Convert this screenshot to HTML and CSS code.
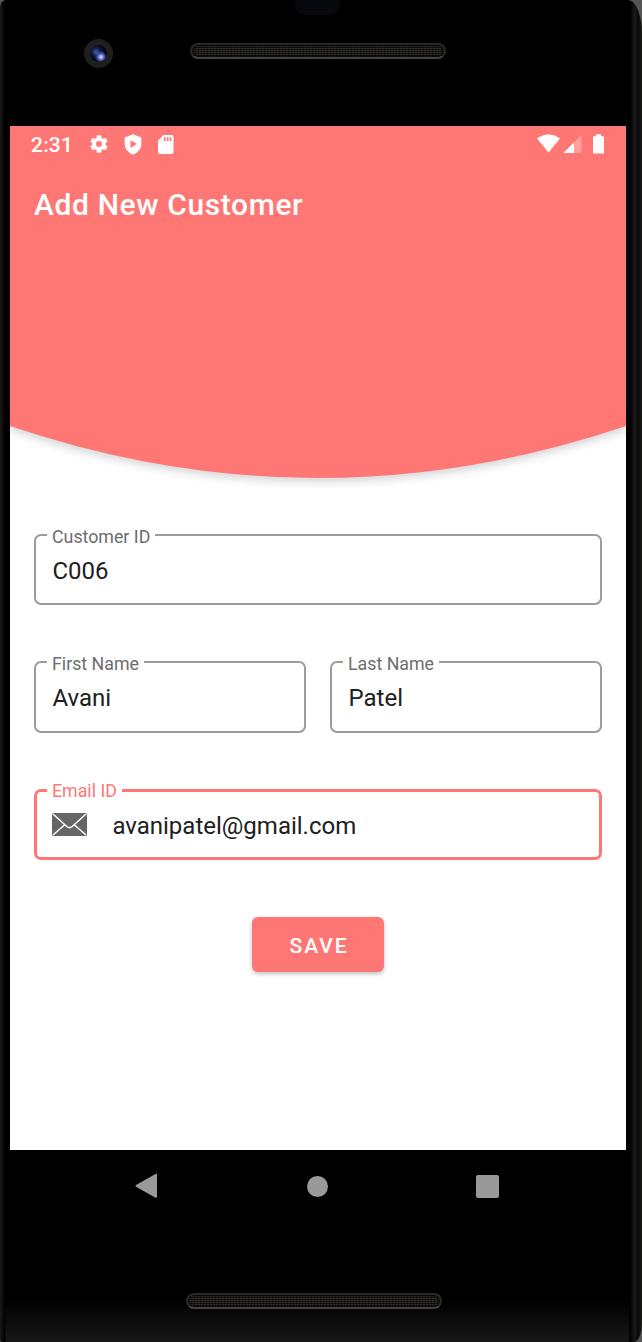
FILE: index.html
```html
<!DOCTYPE html>
<html lang="en">
<head>
<meta charset="utf-8">
<title>Add New Customer</title>
<link rel="stylesheet" href="styles.css">
</head>
<body>
<div class="phone">
  <div class="bezel-top">
    <span class="sensor"></span>
    <span class="camera"><span class="lens"></span></span>
    <span class="speaker"></span>
  </div>
  <main class="screen">
    <header class="header">
      <svg class="curve" width="616" height="380" viewBox="0 0 616 380"><path d="M0 0H616V300Q308 404 0 300Z" fill="#ff7774"/></svg>
      <div class="status">
        <span class="time">2:31</span>
        <svg class="gear" width="22" height="22" viewBox="0 0 24 24" fill="#fff"><path d="M19.14 12.94c.04-.3.06-.61.06-.94 0-.32-.02-.64-.07-.94l2.03-1.58a.49.49 0 0 0 .12-.61l-1.92-3.32a.488.488 0 0 0-.59-.22l-2.39.96c-.5-.38-1.03-.7-1.62-.94l-.36-2.54a.484.484 0 0 0-.48-.41h-3.84c-.24 0-.43.17-.47.41l-.36 2.54c-.59.24-1.13.57-1.62.94l-2.39-.96c-.22-.08-.47 0-.59.22L2.74 8.87c-.12.21-.08.47.12.61l2.03 1.58c-.05.3-.09.63-.09.94s.02.64.07.94l-2.03 1.58a.49.49 0 0 0-.12.61l1.92 3.32c.12.22.37.29.59.22l2.39-.96c.5.38 1.03.7 1.62.94l.36 2.54c.05.24.24.41.48.41h3.84c.24 0 .44-.17.47-.41l.36-2.54c.59-.24 1.13-.56 1.62-.94l2.39.96c.22.08.47 0 .59-.22l1.92-3.32c.12-.22.07-.47-.12-.61l-2.01-1.58zM12 15.2a3.200 3.200 0 1 1 0-6.400 3.200 3.200 0 0 1 0 6.400z"/></svg>
        <svg class="shield" width="18" height="21" viewBox="0 0 18 21"><path d="M9 .3 17.3 3.4V10C17.3 15 13.6 19 9 20.6 4.4 19 .7 15 .7 10V3.400Z" fill="#fff"/><path d="M6.500 6.300V14L13 10.100Z" fill="#ff7774"/></svg>
        <svg class="card" width="16" height="19" viewBox="0 0 16 19"><path d="M5.500 0H13.500Q15.500 0 15.500 2V17Q15.500 19 13.500 19H2Q0 19 0 17V5.500Z" fill="#fff"/><path d="M6.800 2.200V6M9.700 2.200V6M12.500 2.200V6" stroke="#ff7774" stroke-width="1.700"/></svg>
        <span class="spacer"></span>
        <svg class="signals" width="68" height="21" viewBox="0 0 68 21" fill="#fff"><path d="M0 4.500Q11.500-3.300 23 4.500L11.500 18.500Z"/><path d="M26.500 19V18.700L44.500 1V19Z" opacity=".3"/><path d="M26.500 19 37 8.500V19Z"/><path d="M56 3Q56 2.200 56.800 2.200H59V.2H64V2.200H66.200Q67 2.200 67 3V18.800Q67 19.600 66.200 19.600H56.800Q56 19.600 56 18.800Z"/></svg>
      </div>
      <h1 class="title">Add New Customer</h1>
    </header>
    <form class="form">
      <div class="field"><span class="label">Customer ID</span><span class="value">C006</span></div>
      <div class="row">
        <div class="field"><span class="label">First Name</span><span class="value">Avani</span></div>
        <div class="field"><span class="label">Last Name</span><span class="value">Patel</span></div>
      </div>
      <div class="field focused"><span class="label">Email ID</span>
        <svg class="mail" width="35" height="23" viewBox="0 0 35 23"><rect width="35" height="23" rx="1.500" fill="#666"/><path d="M1 1 14.800 13.500Q17.500 15.800 20.200 13.500L34 1M1 22 12.800 11.800M34 22 22.200 11.800" fill="none" stroke="#fff" stroke-width="1.500"/></svg>
        <span class="value">avanipatel@gmail.com</span></div>
      <button class="save" type="button">SAVE</button>
    </form>
  </main>
  <div class="bezel-bottom">
    <nav class="nav">
      <svg width="24" height="26" viewBox="0 0 24 26"><path d="M2.500 12.800 22 1.800V23.800Z" fill="#999" stroke="#999" stroke-width="2" stroke-linejoin="round"/></svg>
      <span class="home"></span>
      <span class="recent"></span>
    </nav>
    <span class="speaker low"></span>
  </div>
</div>
</body>
</html>
```
FILE: styles.css
```css
* { box-sizing: border-box; }
body {
  margin: 0;
  background: #555;
  font-family: Roboto, "Liberation Sans", sans-serif;
}
.phone {
  position: relative;
  width: 642px;
  height: 1342px;
  overflow: hidden;
  background:
    linear-gradient(90deg, #191919, #000 5px, transparent 6px, transparent 628px, #000 630px, #1b1b1b 635px, #080808 638px, #1a1a18 642px),
    linear-gradient(#000 1300px, #181818 1342px);
  border-radius: 6px 14px 8px 2px / 8px 34px 20px 3px;
}
.bezel-top {
  height: 126px;
  display: flex;
  align-items: flex-start;
  padding-left: 84px;
}
.sensor {
  position: absolute;
  left: 295px;
  top: -12px;
  width: 45px;
  height: 27px;
  border-radius: 9px;
  background: #07080d;
}
.camera {
  display: flex;
  align-items: center;
  justify-content: center;
  width: 29px;
  height: 29px;
  margin-top: 39px;
  border-radius: 50%;
  background: #201f1f;
}
.lens {
  width: 17px;
  height: 17px;
  border-radius: 50%;
  background:
    radial-gradient(circle at 11px 12px, #b8c4ff 1px, #4e65c8 3px, transparent 6px),
    radial-gradient(circle at 6px 7px, #3b5299 1px, #101c4e 4px, #03040b 9px);
}
.speaker {
  width: 256px;
  height: 16px;
  margin: 43px 0 0 77px;
  border: 2px solid #292828;
  border-bottom-color: #454241;
  border-radius: 8px;
  background:
    repeating-linear-gradient(90deg, #0006 0 1px, transparent 1px 3px),
    repeating-linear-gradient(#12110e 0 1px, #34312a 1px 2px);
  box-shadow: inset 0 0 2px 1px #050505;
}
.screen {
  width: 616px;
  height: 1024px;
  margin-left: 10px;
  overflow: hidden;
  background: #fff;
}
.header {
  position: relative;
  height: 352px;
}
.curve {
  position: absolute;
  left: 0;
  top: 0;
  filter: drop-shadow(0 4px 4px rgba(0, 0, 0, .16));
}
.status {
  position: relative;
  display: flex;
  align-items: flex-start;
  height: 36px;
  padding: 8px 21px 0 21px;
  color: #fff;
}
.time {
  width: 57px;
  margin-top: -1px;
  font-size: 21px;
  font-weight: 500;
  line-height: 24px;
  letter-spacing: .2px;
}
.gear { margin-top: -1px; }
.shield { margin-left: 14px; }
.card { margin: 1px 0 0 16px; }
.spacer { flex: 1; }
.title {
  position: relative;
  margin: 24px 0 0 24px;
  color: #fff;
  font-size: 30px;
  font-weight: 500;
  line-height: 38px;
  letter-spacing: .62px;
}
.form {
  display: flex;
  flex-direction: column;
  gap: 56px;
  padding: 56.100px 24px 0;
}
.row {
  display: grid;
  grid-template-columns: 1fr 1fr;
  gap: 24px;
}
.field {
  position: relative;
  display: flex;
  align-items: center;
  height: 71.350px;
  padding: 0 17px 0 16.500px;
  border: 2px solid #9c9c9c;
  border-radius: 7px;
  color: #202020;
}
.label {
  position: absolute;
  left: 11px;
  top: -9px;
  padding: 0 5px;
  background: #fff;
  color: #6d6d6d;
  font-size: 17.800px;
  line-height: 20px;
}
.value {
  font-size: 24px;
  line-height: 30px;
  margin-top: 2px;
}
.focused {
  border: 3px solid #ff7774;
  padding-left: 15.400px;
}
.focused .label {
  left: 10px;
  top: -11px;
  color: #ff7774;
}
.focused .value { margin-top: 3px; }
.mail { margin-right: 25px; }
.save {
  align-self: center;
  width: 132px;
  height: 55px;
  margin-top: .9px;
  padding: 2px 0 0 2px;
  border: 0;
  border-radius: 6px;
  background: #ff7774;
  color: #fff;
  font: 500 21px Roboto, "Liberation Sans", sans-serif;
  letter-spacing: 1.900px;
  box-shadow: 0 2px 4px rgba(0, 0, 0, .25);
}
.bezel-bottom { height: 192px; }
.nav {
  display: flex;
  justify-content: space-between;
  align-items: center;
  height: 72px;
  margin: 0 143px 0 134px;
}
.home {
  width: 21px;
  height: 21px;
  border-radius: 50%;
  background: #999;
}
.recent {
  width: 23px;
  height: 23px;
  border-radius: 2px;
  background: #999;
}
.low {
  display: block;
  margin: 70.500px 0 0 186px;
}
```
